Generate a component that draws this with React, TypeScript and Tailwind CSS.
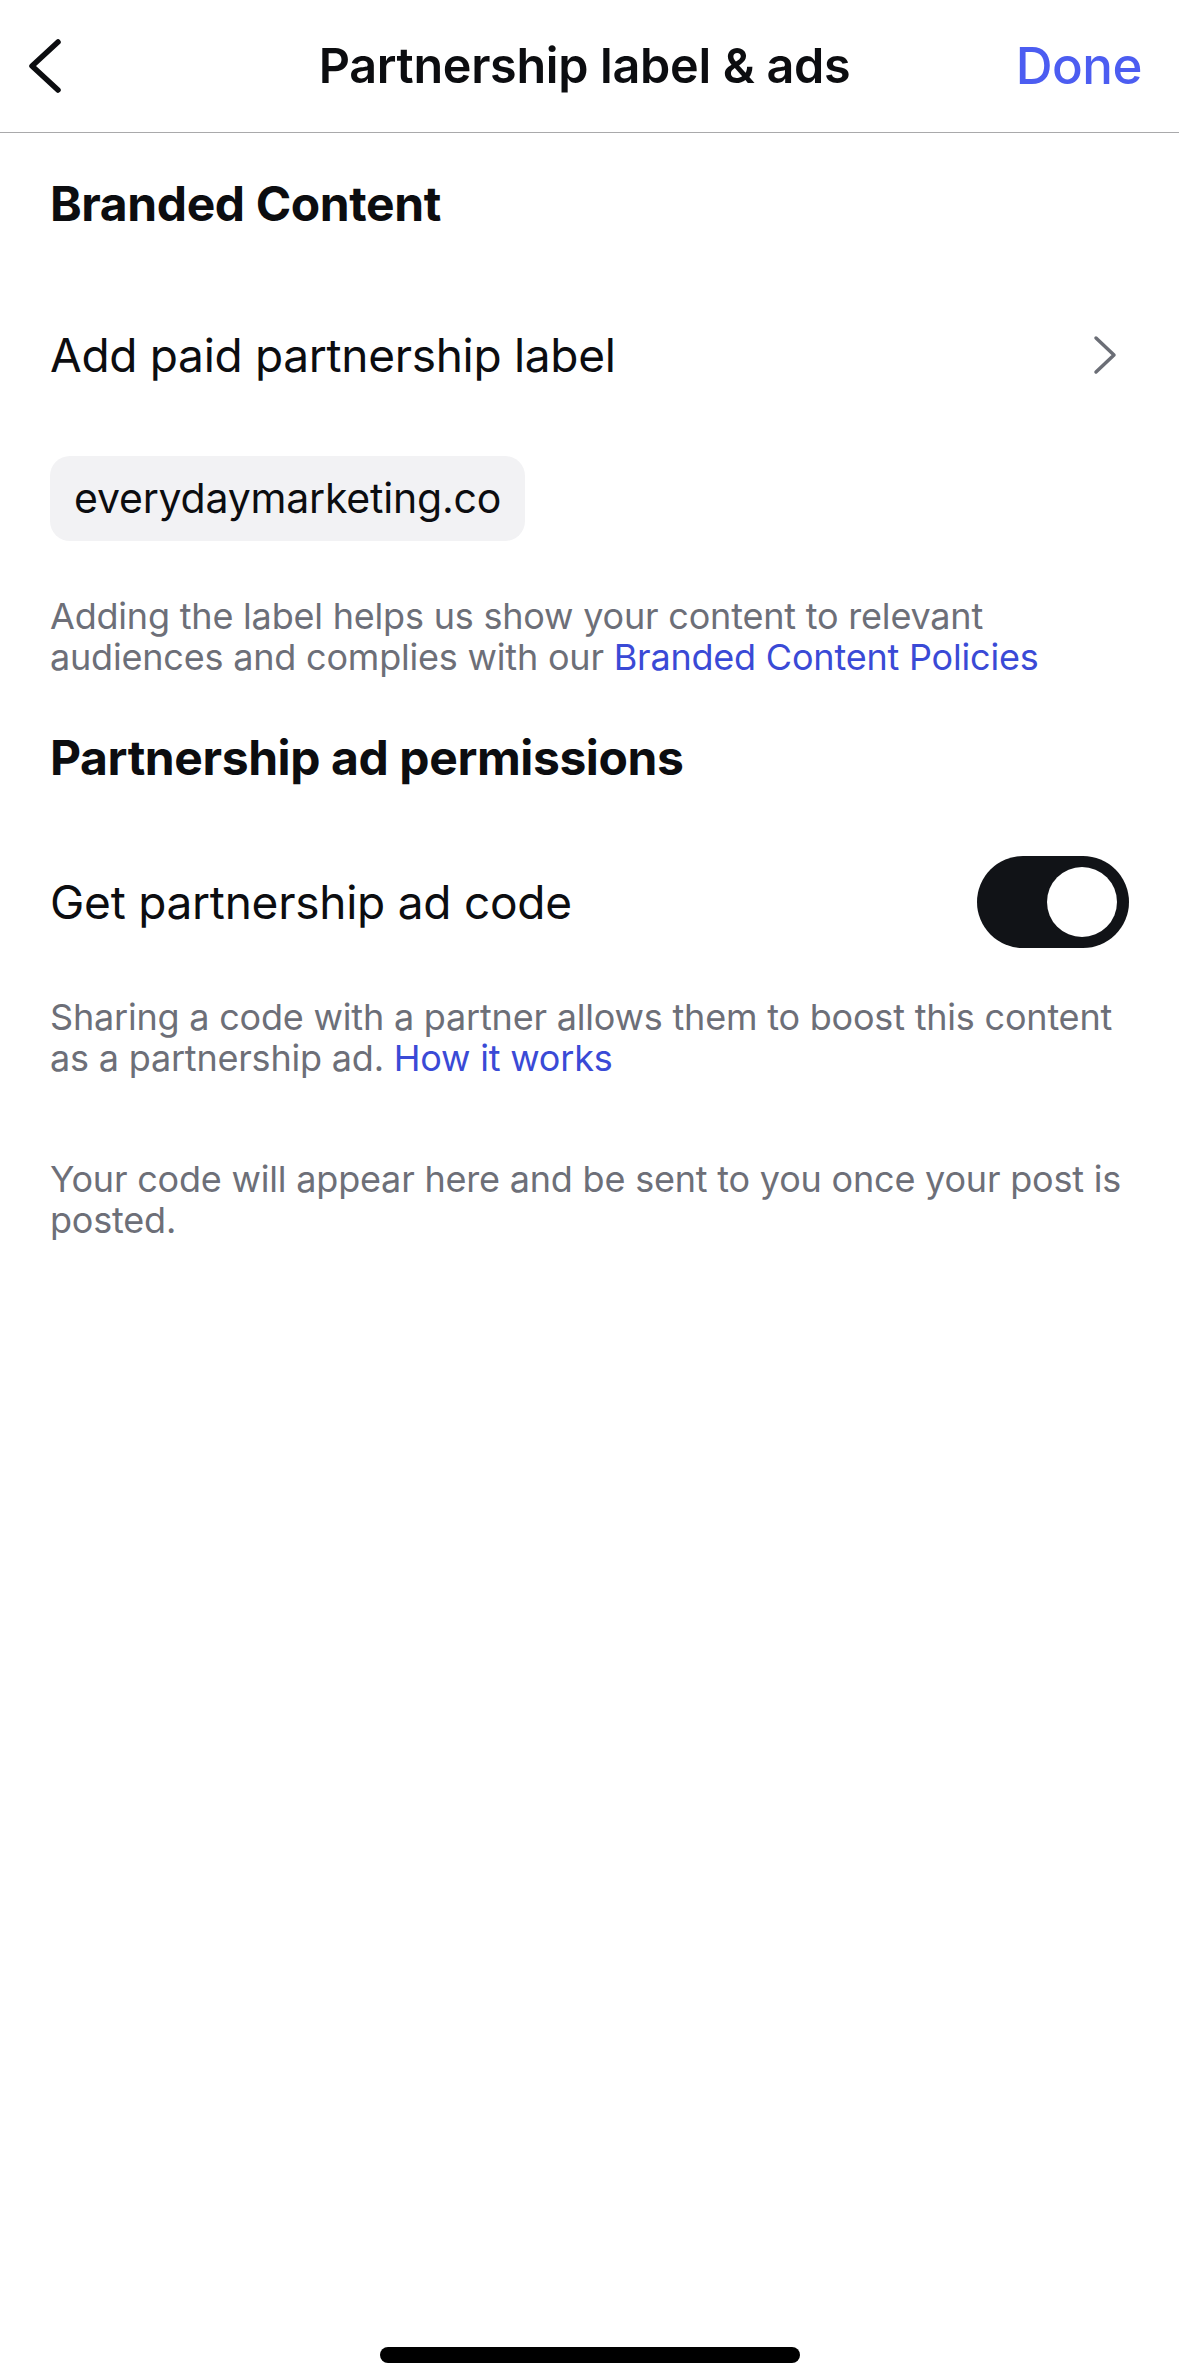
import { useState } from "react";

const font = { fontFamily: "Inter, 'Noto Sans', sans-serif" };

function Toggle({ on, onChange }: { on: boolean; onChange: () => void }) {
  return (
    <button
      onClick={onChange}
      className={`w-[152px] h-[92px] rounded-full p-[12px] flex items-center ${on ? "bg-[#111317] justify-end" : "bg-[#e5e5ea] justify-start"}`}
    >
      <span className="block w-[70px] h-[70px] rounded-full bg-white" />
    </button>
  );
}

export default function App() {
  const [adCode, setAdCode] = useState(true);

  return (
    <div className="h-[2379px] w-full bg-white flex flex-col text-[#0c0d10] antialiased" style={font}>
      {/* Nav bar */}
      <header className="h-[133px] shrink-0 border-b border-[#a9a9ab] flex items-center justify-between px-[27px]">
        <button className="w-[100px] h-[60px] flex items-center">
          <svg className="w-[36px] h-[60px]" viewBox="0 0 36 60" fill="none" stroke="#0c0d10" strokeWidth={5.5} strokeLinecap="round" strokeLinejoin="round">
            <path d="M31 6L5 30l26 24" />
          </svg>
        </button>
        <h1 className="text-[48.5px] font-semibold tracking-[-0.3px]">Partnership label &amp; ads</h1>
        <button className="w-[100px] flex justify-end text-[51px] font-medium text-[#4c5df1] tracking-[-0.5px] mr-[10px]">Done</button>
      </header>

      <main className="px-[50px] flex flex-col">
        <h2 className="mt-[28px] h-[86px] flex items-center text-[48px] font-bold tracking-[-0.4px]">Branded Content</h2>

        <div className="mt-[58px] h-[100px] flex items-center justify-between">
          <span className="text-[46px] tracking-[-0.3px]">Add paid partnership label</span>
          <svg className="w-[24px] h-[40px] mr-[12px]" viewBox="0 0 24 40" fill="none" stroke="#6b6e76" strokeWidth={3.5} strokeLinecap="round" strokeLinejoin="round">
            <path d="M3 3l18 17L3 37" />
          </svg>
        </div>

        <div className="mt-[51px] self-start h-[85px] rounded-[20px] bg-[#f2f2f4] px-[24px] flex items-center">
          <span className="text-[41px] tracking-[-0.2px]">everydaymarketing.co</span>
        </div>

        <p className="mt-[55px] text-[36px] leading-[41px] text-[#6d6f78] tracking-[-0.2px]">
          Adding the label helps us show your content to relevant audiences and complies with our{" "}
          <span className="text-[#3a4ad6]">Branded Content Policies</span>
        </p>

        <h2 className="mt-[37px] h-[86px] flex items-center text-[48px] font-bold tracking-[-0.4px]">Partnership ad permissions</h2>

        <div className="mt-[51px] h-[100px] flex items-center justify-between">
          <span className="text-[46px] tracking-[-0.25px]">Get partnership ad code</span>
          <Toggle on={adCode} onChange={() => setAdCode(!adCode)} />
        </div>

        <p className="mt-[45px] text-[36px] leading-[41px] text-[#6d6f78] tracking-[-0.2px]">
          Sharing a code with a partner allows them to boost this content as a partnership ad.{" "}
          <span className="text-[#3a4ad6]">How it works</span>
        </p>

        <p className="mt-[80px] text-[36px] leading-[41px] text-[#6d6f78] tracking-[-0.2px]">
          Your code will appear here and be sent to you once your post is posted.
        </p>
      </main>

      {/* Home indicator */}
      <div className="mt-auto mb-[16px] flex justify-center">
        <div className="w-[420px] h-[16px] rounded-full bg-black" />
      </div>
    </div>
  );
}
